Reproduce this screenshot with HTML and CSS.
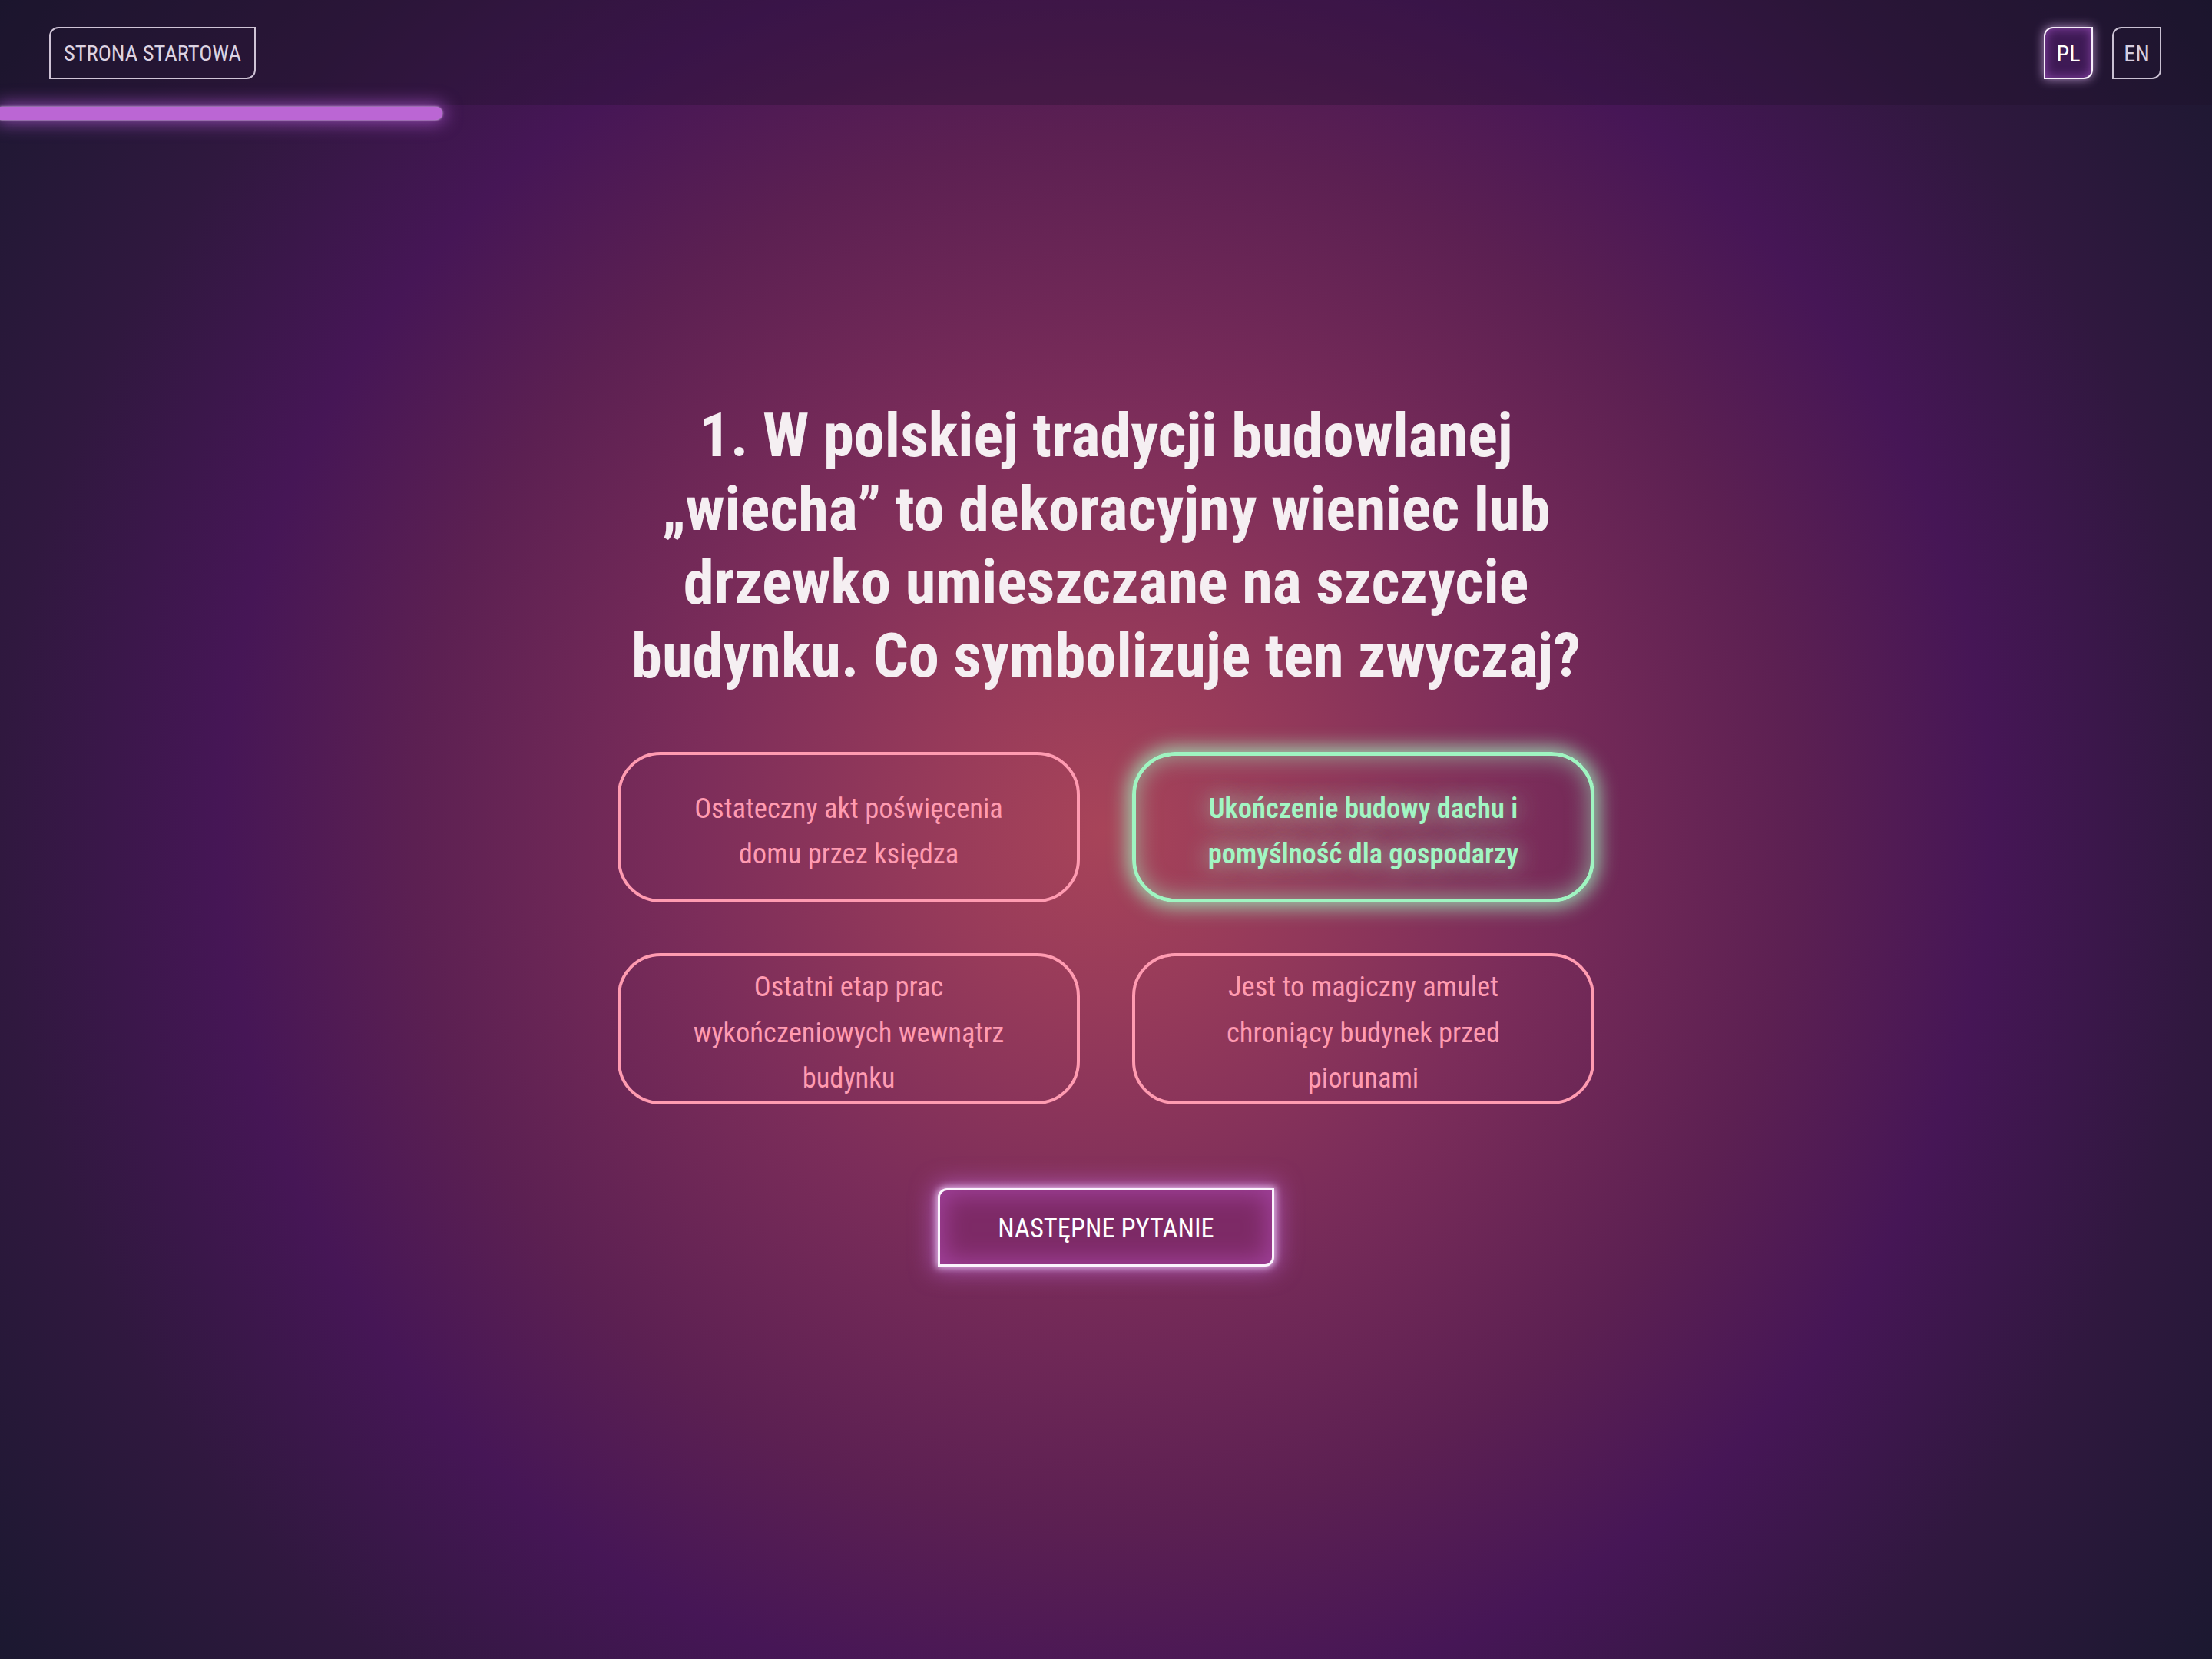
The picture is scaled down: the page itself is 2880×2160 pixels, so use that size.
FILE: index.html
```html
<!DOCTYPE html>
<html lang="pl">
<head>
<meta charset="utf-8">
<title>Quiz</title>
<link rel="stylesheet" href="styles.css">
</head>
<body>
<header class="topbar">
  <a class="home-btn" href="#">STRONA STARTOWA</a>
  <nav class="lang">
    <a class="lang-btn active" href="#">PL</a>
    <a class="lang-btn" href="#">EN</a>
  </nav>
</header>
<div class="progress"><div class="progress-bar" style="width:20%"></div></div>
<main class="quiz">
  <h1 class="question">1. W polskiej tradycji budowlanej „wiecha” to dekoracyjny wieniec lub drzewko umieszczane na szczycie budynku. Co symbolizuje ten zwyczaj?</h1>
  <div class="answers">
    <button class="answer">Ostateczny akt poświęcenia domu przez księdza</button>
    <button class="answer correct">Ukończenie budowy dachu i pomyślność dla gospodarzy</button>
    <button class="answer">Ostatni etap prac wykończeniowych wewnątrz budynku</button>
    <button class="answer">Jest to magiczny amulet chroniący budynek przed piorunami</button>
  </div>
  <button class="next-btn">NASTĘPNE PYTANIE</button>
</main>
</body>
</html>
```
FILE: styles.css
```css
* { box-sizing: border-box; }
html, body { margin: 0; padding: 0; }
body {
  min-height: 100vh;
  font-family: "Roboto Condensed", "Open Sans Condensed", "Noto Sans", sans-serif;
  font-stretch: 62.5%;
  color: #f3edf1;
  background: radial-gradient(circle at 50% 50%,
    #a84459 0%, #983b5a 12%, #7c2d5a 30%, #5c2052 50%, #461656 64%, #30183f 80%, #1b1830 100%);
  background-attachment: fixed;
}
.topbar {
  height: 137px;
  display: flex;
  align-items: center;
  justify-content: space-between;
  padding: 0 66px 0 64px;
  background: rgba(30, 15, 40, 0.3);
}
.home-btn {
  display: flex;
  align-items: center;
  height: 68px;
  padding: 2px 17px 0;
  border: 2px solid #cfc3d6;
  border-radius: 12px 0 12px 0;
  color: #dcd3e2;
  font-size: 28.5px;
  text-decoration: none;
}
.lang { display: flex; gap: 25px; }
.lang-btn {
  width: 64px;
  height: 68px;
  display: flex;
  align-items: center;
  justify-content: center;
  padding-top: 2px;
  border: 2px solid #c9c0d2;
  border-radius: 12px 0 12px 0;
  color: #d6cede;
  font-size: 30px;
  text-decoration: none;
}
.lang-btn.active {
  color: #fff;
  border-color: #f6eefa;
  background: #3e1a55;
  box-shadow: 0 0 14px rgba(225, 185, 245, 0.75), inset 0 0 14px #8a45a8;
}
.progress {
  height: 17px;
  margin-top: 2px;
}
.progress-bar {
  height: 100%;
  background: #bb66d4;
  border-radius: 0 9px 9px 0;
  box-shadow: 0 0 3px #f1d6ff, 0 0 22px 4px rgba(180, 90, 215, 0.7);
}
.quiz {
  display: flex;
  flex-direction: column;
  align-items: center;
  padding-top: 363px;
}
.question {
  width: 1300px;
  margin: 0;
  text-align: center;
  font-size: 80.5px;
  line-height: 95.5px;
  font-weight: 700;
  color: #f5eff2;
}
.answers {
  margin-top: 78px;
  display: grid;
  grid-template-columns: 602px 602px;
  column-gap: 68px;
  row-gap: 66px;
}
.answer {
  min-height: 196px;
  padding: 10px 72px 0;
  border: 4px solid #ff9bb1;
  border-radius: 56px;
  background: transparent;
  color: #ff9bb1;
  font-family: inherit;
  font-stretch: inherit;
  font-size: 36.5px;
  line-height: 59.5px;
  text-align: center;
  display: flex;
  align-items: center;
  justify-content: center;
}
.answer.correct {
  border: 5px solid #9ff5c1;
  color: #a2f6c3;
  font-weight: 600;
  box-shadow: 0 0 24px 6px rgba(159, 245, 193, 0.8), inset 0 0 30px rgba(159, 245, 193, 0.6);
  text-shadow: 0 0 30px rgba(170, 245, 200, 0.9);
}
.next-btn {
  margin-top: 109px;
  width: 438px;
  height: 102px;
  padding-top: 4px;
  border: 3px solid #fbf4fd;
  border-radius: 12px 0 12px 0;
  background: #7d2a66;
  color: #fff;
  font-family: inherit;
  font-stretch: inherit;
  font-size: 34.5px;
  box-shadow: 0 0 10px 2px rgba(245, 215, 255, 0.8), 0 0 30px 6px rgba(200, 110, 230, 0.6), inset 0 0 30px 6px #a0409a;
}
```
